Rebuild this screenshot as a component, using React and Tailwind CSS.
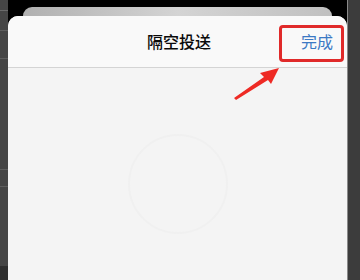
import React from "react";

export default function App() {
  return (
    <div
      className="relative w-[360px] h-[280px] overflow-hidden flex bg-black"
      style={{ fontFamily: '"Noto Sans CJK SC", "Noto Sans", sans-serif' }}
    >
      {/* left background strip */}
      <div className="w-[8px] h-full bg-[#454545] flex flex-col">
        <div className="h-[10px]" />
        <div className="h-[1px] bg-[#6a6a6a]" />
        <div className="h-[19px]" />
        <div className="h-[1px] bg-[#5e5e5e]" />
        <div className="h-[27px]" />
        <div className="h-[1px] bg-[#5e5e5e]" />
        <div className="h-[110px]" />
        <div className="h-[1px] bg-[#5e5e5e]" />
        <div className="h-[16px]" />
        <div className="h-[1px] bg-[#5e5e5e]" />
        <div className="flex-1" />
        <div className="h-[14px] bg-[#2e2e2e]" />
      </div>

      {/* middle */}
      <div className="w-[339px] h-full flex flex-col">
        <div className="h-[16px] bg-black flex px-[15px] pt-[7px]">
          <div className="flex-1 rounded-t-[9px] bg-gradient-to-r from-[#b0b0b0] via-[#d4d4d4] to-[#c0c0c0]" />
        </div>
        <div className="flex-1 rounded-t-[10px] bg-[#f4f4f4] flex flex-col overflow-hidden">
          <div className="h-[51px] bg-[#f9f9f9] flex items-center justify-between pl-[139px] pr-[14px] pb-[1px]">
            <span className="text-[16px] leading-none text-[#0a0a0a] font-medium">隔空投送</span>
            <span className="text-[16px] leading-none text-[#3c79c4]">完成</span>
          </div>
          <div className="h-[1px] bg-[#d4d4d4]" />
          <div className="flex-1 flex items-center justify-center">
            <div className="w-[100px] h-[100px] rounded-full border-[2px] border-[#f0f0f0] mt-[20px]" />
          </div>
        </div>
      </div>

      {/* right strip */}
      <div className="w-[1px] h-full bg-[#8a8a8a]" />
      <div className="flex-1 h-full bg-[#3c3c3c]" />

      {/* annotation: red box */}
      <div className="absolute left-[279px] top-[25px] w-[65px] h-[37px] border-[3px] border-[#e02a2a] rounded-[4px]" />

      {/* annotation: arrow */}
      <svg className="absolute left-0 top-0" width="360" height="280" viewBox="0 0 360 280">
        <path d="M234 98 L264 77 L260 73 L279 68 L271 84 L268 80 L236 100 Z" fill="#ee2a24" />
      </svg>
    </div>
  );
}
